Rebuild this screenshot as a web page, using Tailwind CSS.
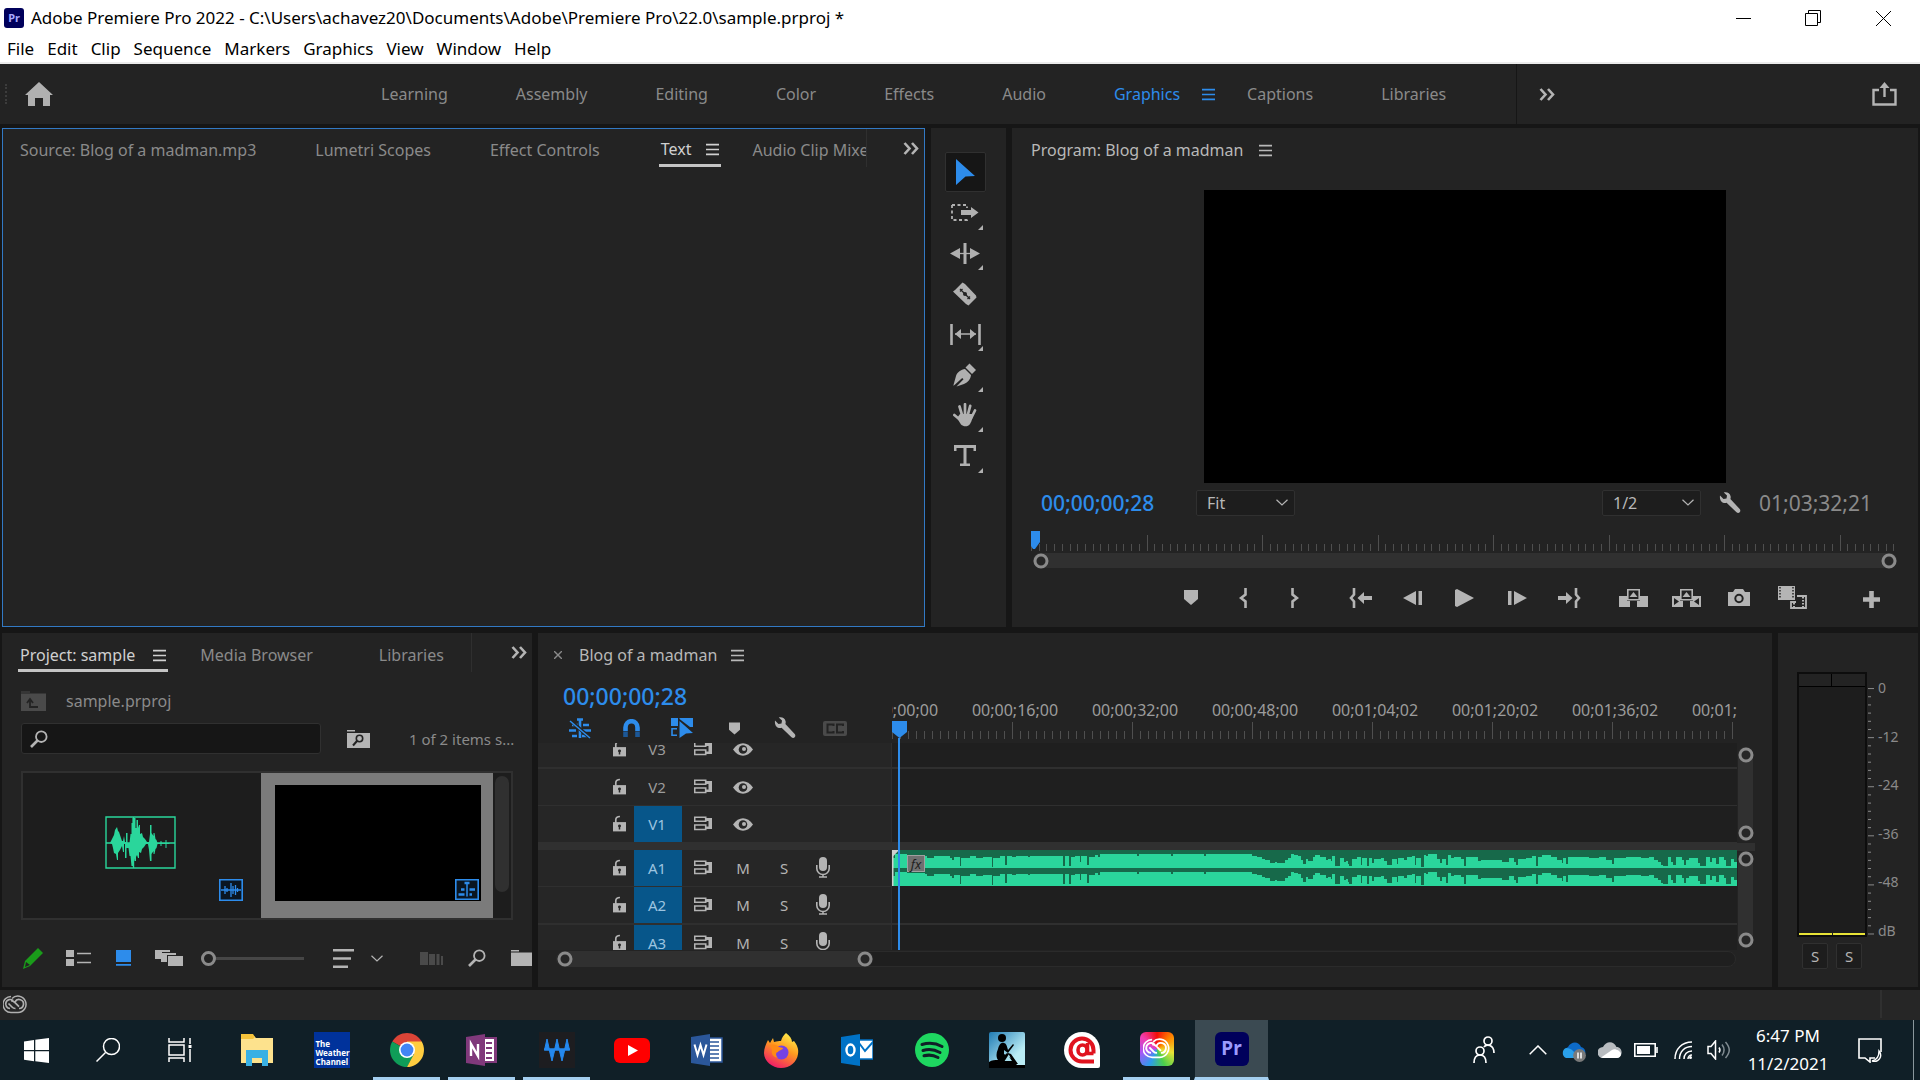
<!DOCTYPE html>
<html lang="en">
<head>
<meta charset="utf-8">
<title>Adobe Premiere Pro 2022</title>
<script src="https://cdn.jsdelivr.net/npm/@tailwindcss/browser@4"></script>
</head>
<body class="flex h-screen min-h-[900px] flex-col overflow-hidden bg-[#161616] font-['Noto_Sans',sans-serif] text-base leading-6 text-[#8a8a8a]">

<svg class="hidden" aria-hidden="true">
  <symbol id="burger" viewBox="0 0 12 12"><path d="M0 1.500h12M0 6h12M0 10.500h12" stroke="currentColor" stroke-width="1.400"/></symbol>
  <symbol id="more" viewBox="0 0 16 13"><path d="M1.500 1l5 5.500-5 5.500M9 1l5 5.500-5 5.500" fill="none" stroke="currentColor" stroke-width="2.600"/></symbol>
  <symbol id="chev" viewBox="0 0 12 7"><path d="M.5.7L6 6 11.500.7" fill="none" stroke="currentColor" stroke-width="1.200"/></symbol>
  <symbol id="wrench" viewBox="0 0 22 22"><path d="M1 3.500L4.500 7l3-.5.5-3L4.800.5C8-.3 11 1.300 11.600 4.300c.2 1 .1 2-.2 2.800l9.300 10c.9 1 .8 2.300 0 3.200s-2.300.9-3.200 0L7.600 10.800c-3.500 1.200-7.400-1.600-6.600-7.300z" fill="currentColor"/></symbol>
  <symbol id="knob" viewBox="0 0 16 16"><circle cx="8" cy="8" r="6" fill="#262626" stroke="#8a8a8a" stroke-width="3"/></symbol>
  <symbol id="marker" viewBox="0 0 14 15"><path d="M0 0h14v9l-7 6-7-6z" fill="currentColor"/></symbol>
  <symbol id="mag" viewBox="0 0 18 18"><circle cx="11.300" cy="6.700" r="5.300" fill="none" stroke="currentColor" stroke-width="1.800"/><path d="M7.500 10.500L1 17" stroke="currentColor" stroke-width="2.600"/></symbol>
  <symbol id="lock" viewBox="0 0 14 17"><path d="M0 7h14v10H0z" fill="currentColor"/><path d="M3 8V4.500C3 2.500 4.500 1 7.500 1" fill="none" stroke="currentColor" stroke-width="1.800"/><path d="M7 9.500a1.600 1.600 0 0 1 .8 3V15H6.200v-2.500a1.600 1.600 0 0 1 .8-3z" fill="#262626"/></symbol>
  <symbol id="sync" viewBox="0 0 19 15"><path d="M.7 1.200h11v4h-11zM.7 9h11v4.500h-11z" fill="none" stroke="currentColor" stroke-width="1.600"/><path d="M11 2h7v11h-6v-2.500h2.500V5H11z" fill="currentColor"/></symbol>
  <symbol id="eye" viewBox="0 0 20 13"><path d="M0 6.500C3 2.300 6.300.3 10 .3s7 2 10 6.200c-3 4.200-6.300 6.200-10 6.200S3 10.700 0 6.500z" fill="currentColor"/><circle cx="10" cy="6.500" r="4.300" fill="#262626"/><circle cx="11" cy="6" r="2" fill="currentColor"/></symbol>
  <symbol id="mic" viewBox="0 0 14 21"><rect x="3" y="0" width="8" height="14" rx="4" fill="currentColor"/><path d="M.8 8v3.500a6.200 6 0 0 0 12.400 0V8M7 17v3M3 20h8" fill="none" stroke="currentColor" stroke-width="1.600"/></symbol>
  <symbol id="cc" viewBox="0 0 24 19"><path d="M8 1.500A8 8 0 1 0 8 17.500h7A8.200 8.200 0 1 0 9 3.500" fill="none" stroke="currentColor" stroke-width="1.500"/><path d="M16 13.500a4.500 4.500 0 1 0-4-6.500M12.500 13.500a4.500 4.500 0 0 1-3.500-1.500L5.500 8.500M10 5.500a4.500 4.500 0 1 0-3 8M8 5.600c2 0 3 1 4 2l4 4" fill="none" stroke="currentColor" stroke-width="1.700"/></symbol>
</svg>

<!-- Title bar and menu -->
<header class="shrink-0 border-b-2 border-[#ececec] bg-white text-[17px] text-black">
  <div class="flex h-9 items-center pl-1">
    <div class="flex size-5 items-center justify-center rounded-[3px] bg-[#00005b] text-[11px] leading-5 font-bold text-[#a9a9ff]">Pr</div>
    <h1 class="ml-[7px] grow whitespace-nowrap">Adobe Premiere Pro 2022 - C:\Users\achavez20\Documents\Adobe\Premiere Pro\22.0\sample.prproj *</h1>
    <button aria-label="Minimize" class="flex h-8 w-[70px] items-center justify-center"><svg class="size-[15px]" viewBox="0 0 15 15"><path d="M0 7.500h15" stroke="#000"/></svg></button>
    <button aria-label="Restore" class="flex h-8 w-[70px] items-center justify-center"><svg class="size-4" viewBox="0 0 16 16"><path d="M.5 3.500h12v12H.5zM3.500 3V.5h12v12H13" fill="none" stroke="#000"/></svg></button>
    <button aria-label="Close" class="mr-[2px] flex h-8 w-[70px] items-center justify-center"><svg class="size-[15px]" viewBox="0 0 15 15"><path d="M0 0l15 15M15 0L0 15" stroke="#000"/></svg></button>
  </div>
  <nav class="flex h-[26px] items-center gap-[13px] px-[7px]">
    <button>File</button><button>Edit</button><button>Clip</button><button>Sequence</button><button>Markers</button><button>Graphics</button><button>View</button><button>Window</button><button>Help</button>
  </nav>
</header>

<!-- Workspaces -->
<nav class="mb-1 flex h-[60px] shrink-0 items-center bg-[#232323]">
  <div class="ml-[5px] h-5 w-[3px] border-l-2 border-dotted border-[#3c3c3c]"></div>
  <button aria-label="Home" class="ml-[17px] w-[322px]"><svg class="h-6 w-7" viewBox="0 0 28 24"><path d="M14 0l14 13h-3v11h-7v-8h-8v8H3V13H0z" fill="#b0b0b0"/></svg></button>
  <div class="flex grow items-center">
    <button class="px-[34px]">Learning</button><button class="px-[34px]">Assembly</button><button class="px-[34px]">Editing</button><button class="px-[34px]">Color</button><button class="px-[34px]">Effects</button><button class="px-[34px]">Audio</button>
    <button class="flex items-center gap-[22px] pr-8 pl-[34px] text-[#2d8ceb]">Graphics<svg class="size-[13px]"><use href="#burger"/></svg></button>
    <button class="pr-[34px]">Captions</button><button class="pr-[70px] pl-[34px]">Libraries</button>
    <div class="h-[60px] w-px bg-[#161616]"></div>
    <button aria-label="More workspaces" class="ml-[22px]"><svg class="h-[13px] w-4 text-[#b4b4b4]"><use href="#more"/></svg></button>
  </div>
  <button aria-label="Quick export" class="mr-[23px]"><svg class="h-6 w-[25px]" viewBox="0 0 25 24"><path d="M7 8H1.500v14.500h22V8H18M12.500 15V4" fill="none" stroke="#b4b4b4" stroke-width="2.400"/><path d="M12.500 0l5 6h-10z" fill="#b4b4b4"/></svg></button>
</nav>

<main class="flex min-h-0 grow flex-col gap-[6px] px-[2px] pb-[3px]">
  <div class="flex min-h-0 flex-[499] gap-[6px]">

    <!-- Source group -->
    <section class="flex min-w-0 flex-[922] flex-col border border-[#3279c4] bg-[#232323]">
      <div class="flex h-[38px] items-stretch pl-[17px]">
        <div class="flex min-w-0 grow gap-[59px] overflow-hidden border-r border-[#2f2f2f] whitespace-nowrap">
          <button class="pt-1">Source: Blog of a madman.mp3</button>
          <button class="pt-1">Lumetri Scopes</button>
          <button class="pt-1">Effect Controls</button>
          <button class="-mr-[28px] flex items-center gap-[15px] border-b-[3px] border-[#c4c4c4] px-[2px] pt-[5px] text-[#d0d0d0]">Text<svg class="size-[13px]"><use href="#burger"/></svg></button>
          <button class="pt-1">Audio Clip Mixer</button>
        </div>
        <button aria-label="More panels" class="flex w-[58px] items-center justify-end pr-[5px]"><svg class="h-[13px] w-4 text-[#b4b4b4]"><use href="#more"/></svg></button>
      </div>
    </section>

    <!-- Tools -->
    <aside class="w-[75px] shrink-0 bg-[#232323] pt-6 text-[#b0b0b0]">
      <div class="ml-[14px] flex h-[324px] flex-col justify-between">
        <button aria-label="Selection" class="flex h-10 w-[41px] items-center justify-center rounded-[2px] border border-[#303030] bg-[#161616]"><svg class="h-[26px] w-[19px]" viewBox="0 0 19 26"><path d="M0 0l19 17-9.500.5L0 26z" fill="#2d8ceb"/></svg></button>
        <button aria-label="Track select forward" class="relative flex h-10 w-[41px] items-center justify-center"><svg class="h-[17px] w-7" viewBox="0 0 28 17"><path d="M1 1h15v3M1 1v15h15v-3" fill="none" stroke="currentColor" stroke-width="1.800" stroke-dasharray="3 2.500"/><path d="M10 6h10V3l7.500 5.500L20 14v-3H10z" fill="currentColor"/></svg><svg class="absolute right-[3px] bottom-[3px] size-[5px]" viewBox="0 0 5 5"><path d="M5 0v5H0z" fill="currentColor"/></svg></button>
        <button aria-label="Ripple edit" class="relative flex h-10 w-[41px] items-center justify-center"><svg class="h-[21px] w-[30px]" viewBox="0 0 30 21"><path d="M0 10.500L10 5v11zM30 10.500L20 5v11z" fill="currentColor"/><path d="M15 0v21" stroke="currentColor" stroke-width="3"/><path d="M8 10.500h14" stroke="currentColor" stroke-width="1.300"/></svg><svg class="absolute right-[3px] bottom-[3px] size-[5px]" viewBox="0 0 5 5"><path d="M5 0v5H0z" fill="currentColor"/></svg></button>
        <button aria-label="Razor" class="flex h-10 w-[41px] items-center justify-center"><svg class="size-6" viewBox="0 0 24 24"><path d="M0 9.500l2-1.500L8 2l1.500-1.500L12 2l11 11.500.5 2-8 8L13 22 1.500 11z" fill="currentColor"/><path d="M7 7l10 10M7 9.500L9.500 7M14.500 17l2.500-2.500" stroke="#232323" stroke-width="1.300"/><circle cx="12" cy="12" r="2" fill="#232323"/></svg></button>
        <button aria-label="Slip" class="relative flex h-10 w-[41px] items-center justify-center"><svg class="h-[21px] w-[31px]" viewBox="0 0 31 21"><path d="M1.500 0v21M29.500 0v21" stroke="currentColor" stroke-width="2.600"/><path d="M5 10h21" stroke="currentColor" stroke-width="1.500"/><path d="M5 10l6-5v10zM26 10l-6-5v10z" fill="currentColor"/></svg><svg class="absolute right-[3px] bottom-[3px] size-[5px]" viewBox="0 0 5 5"><path d="M5 0v5H0z" fill="currentColor"/></svg></button>
        <button aria-label="Pen" class="relative flex h-10 w-[41px] items-center justify-center"><svg class="size-6" viewBox="0 0 24 24"><path d="M16.500.5L23 7l-4 4-6.500-6.500zM12 6l6 6c-.5 4-3 7.500-7 9l-7.500 2.500 7-7.200-1.300-1.300L1.500 22 .3 22.700 3 13c1.300-4 5-6.500 9-7z" fill="currentColor"/></svg><svg class="absolute right-[3px] bottom-[3px] size-[5px]" viewBox="0 0 5 5"><path d="M5 0v5H0z" fill="currentColor"/></svg></button>
        <button aria-label="Hand" class="relative flex h-10 w-[41px] items-center justify-center"><svg class="size-6" viewBox="0 0 24 24"><path d="M1.300 12l6 5M6.500 3.500l3 10M12 1.200V13M17.200 2.800L14.500 13M22 7.500l-4 8" fill="none" stroke="currentColor" stroke-width="2.700" stroke-linecap="round"/><path d="M7 11h12c1 3 0 7-2 10-2 3-6.500 3-9 .5L4 15z" fill="currentColor"/></svg><svg class="absolute right-[3px] bottom-[3px] size-[5px]" viewBox="0 0 5 5"><path d="M5 0v5H0z" fill="currentColor"/></svg></button>
        <button aria-label="Type" class="relative flex h-10 w-[41px] items-center justify-center"><svg class="h-[21px] w-[22px]" viewBox="0 0 22 21"><path d="M0 0h22v6h-2.500V3h-7v15.500H16V21H6v-2.500h3.500V3h-7v3H0z" fill="currentColor"/></svg><svg class="absolute right-[3px] bottom-[3px] size-[5px]" viewBox="0 0 5 5"><path d="M5 0v5H0z" fill="currentColor"/></svg></button>
      </div>
    </aside>

    <!-- Program monitor -->
    <section class="flex min-w-0 flex-[907] flex-col bg-[#232323] text-[#b4b4b4]">
      <div class="flex h-[62px] shrink-0 items-start pt-[10px] pl-[19px]"><button class="flex items-center gap-4 text-[#b8b8b8]">Program: Blog of a madman<svg class="size-[13px]"><use href="#burger"/></svg></button></div>
      <div class="flex min-h-0 grow justify-center"><div class="aspect-[521/292] h-full bg-black"></div></div>
      <div class="flex h-[42px] shrink-0 items-center pr-[46px] pb-[2px] pl-[29px]">
        <div class="w-[155px] text-[21px] font-medium text-[#2d8ceb]">00;00;00;28</div>
        <label class="relative"><span class="sr-only">Zoom level</span><select class="block h-[26px] w-[99px] appearance-none rounded-[2px] border border-[#303030] bg-[#1d1d1d] pl-[10px] leading-[22px] text-[#b8b8b8]"><option>Fit</option></select><svg class="pointer-events-none absolute top-[9px] right-[7px] h-[7px] w-3"><use href="#chev"/></svg></label>
        <div class="grow"></div>
        <label class="relative"><span class="sr-only">Playback resolution</span><select class="block h-[26px] w-[99px] appearance-none rounded-[2px] border border-[#303030] bg-[#1d1d1d] pl-[10px] leading-[22px] text-[#b8b8b8]"><option>1/2</option></select><svg class="pointer-events-none absolute top-[9px] right-[7px] h-[7px] w-3"><use href="#chev"/></svg></label>
        <button aria-label="Settings" class="mx-[18px]"><svg class="size-[22px]"><use href="#wrench"/></svg></button>
        <div class="text-[21px] text-[#8a8a8a]">01;03;32;21</div>
      </div>
      <div class="relative mx-[19px] h-[28px] shrink-0">
        <svg id="programRuler" class="h-full w-full"></svg>
        <svg class="absolute top-[6px] left-0 h-[18px] w-[9px]" viewBox="0 0 9 18"><path d="M0 0h9v11l-5 7H2l-2-3z" fill="#2d8ceb"/></svg>
      </div>
      <div class="mx-[21px] flex h-[15px] shrink-0 justify-between rounded-full bg-[#303030]"><svg class="size-4"><use href="#knob"/></svg><svg class="size-4"><use href="#knob"/></svg></div>
      <div class="grid h-[59px] shrink-0 grid-cols-[1fr_auto_1fr] items-center">
        <div class="flex items-center justify-end pr-[14px]">
          <button aria-label="Add marker" class="flex w-[52px] justify-center"><svg class="h-[15px] w-[14px]"><use href="#marker"/></svg></button>
          <button aria-label="Mark in" class="flex w-[52px] justify-center"><svg class="h-5 w-2" viewBox="0 0 8 20"><path d="M6.500 0v6.500L2 10l4.500 3.500V20" fill="none" stroke="currentColor" stroke-width="2.600"/></svg></button>
          <button aria-label="Mark out" class="flex w-[52px] justify-center"><svg class="h-5 w-2" viewBox="0 0 8 20"><path d="M1.500 0v6.500L6 10l-4.500 3.500V20" fill="none" stroke="currentColor" stroke-width="2.600"/></svg></button>
        </div>
        <div class="flex items-center">
          <button aria-label="Go to in" class="flex w-[52px] justify-center"><svg class="h-5 w-6" viewBox="0 0 24 20"><path d="M5 0v6.500L2 10l3 3.500V20" fill="none" stroke="currentColor" stroke-width="2.600"/><path d="M8.500 10l6.500-6v4h8v4h-8v4z" fill="currentColor"/></svg></button>
          <button aria-label="Step back" class="flex w-[52px] justify-center"><svg class="h-[14px] w-5" viewBox="0 0 20 14"><path d="M0 7L13 0v14zM15.500 0H19v14h-3.500z" fill="currentColor"/></svg></button>
          <button aria-label="Play" class="flex w-[52px] justify-center"><svg class="h-[18px] w-[19px]" viewBox="0 0 19 18"><path d="M0 1l2-1 17 9-17 9-2-1z" fill="currentColor"/></svg></button>
          <button aria-label="Step forward" class="flex w-[52px] justify-center"><svg class="h-[14px] w-5" viewBox="0 0 20 14"><path d="M20 7L7 0v14zM1 0h3.500v14H1z" fill="currentColor"/></svg></button>
          <button aria-label="Go to out" class="flex w-[52px] justify-center"><svg class="h-5 w-6" viewBox="0 0 24 20"><path d="M19 0v6.500l3 3.500-3 3.500V20" fill="none" stroke="currentColor" stroke-width="2.600"/><path d="M15.500 10L9 4v4H1v4h8v4z" fill="currentColor"/></svg></button>
        </div>
        <div class="flex items-center pr-[38px] pl-3">
          <button aria-label="Lift" class="flex w-[53px] shrink-0 justify-center"><svg class="h-[18px] w-[29px]" viewBox="0 0 29 18"><path d="M0 7h8v5h3v6H0zM29 7h-8v5h-3v6h11z" fill="currentColor"/><path d="M8.800.8h11.400v10H8.800z" fill="none" stroke="currentColor" stroke-width="1.600"/><path d="M14.500 3l4 5h-8z" fill="currentColor"/></svg></button>
          <button aria-label="Extract" class="flex w-[53px] shrink-0 justify-center"><svg class="h-[18px] w-[29px]" viewBox="0 0 29 18"><path d="M0 7h8v5h3v6H0zM29 7h-8v5h-3v6h11z" fill="currentColor"/><path d="M2 9l5 3.500L2 16zM27 9l-5 3.500 5 3.500z" fill="#232323"/><path d="M8.800.8h11.400v10H8.800z" fill="none" stroke="currentColor" stroke-width="1.600"/><path d="M14.500 3l4 5h-8z" fill="currentColor"/></svg></button>
          <button aria-label="Export frame" class="flex w-[53px] shrink-0 justify-center"><svg class="h-[17px] w-[22px]" viewBox="0 0 22 17"><path d="M0 3h5l2-3h8l2 3h5v14H0z" fill="currentColor"/><circle cx="11" cy="9.500" r="3.700" fill="none" stroke="#232323" stroke-width="2"/></svg></button>
          <button aria-label="Comparison view" class="flex w-[53px] shrink-0 justify-center"><svg class="h-[23px] w-[29px]" viewBox="0 0 29 23"><path d="M0 0h17v14H0z" fill="currentColor"/><path d="M2 1v12M15 1v12" stroke="#232323" stroke-width="1.500" stroke-dasharray="1.500 1.500"/><path d="M19 10h9v12H13v-6h5" fill="none" stroke="currentColor" stroke-width="1.800"/><path d="M16 17v4M25 11v10" stroke="currentColor" stroke-width="2" stroke-dasharray="1.500 1.500"/></svg></button>
          <button aria-label="Button editor" class="ml-auto"><svg class="mt-1 size-[17px]" viewBox="0 0 17 17"><path d="M8.500 0v17M0 8.500h17" stroke="currentColor" stroke-width="4.600"/></svg></button>
        </div>
      </div>
    </section>
  </div>

  <div class="flex min-h-0 flex-[354] gap-[6px]">

    <!-- Project -->
    <section class="flex min-w-0 flex-[530] flex-col overflow-hidden bg-[#232323]">
      <div class="flex h-[39px] shrink-0 pl-4">
        <div class="flex min-w-0 grow items-stretch overflow-hidden border-r border-[#2f2f2f] whitespace-nowrap">
          <button class="flex items-center gap-[18px] border-b-[3px] border-[#c4c4c4] px-[2px] pt-2 text-[#d0d0d0]">Project: sample<svg class="size-[13px]"><use href="#burger"/></svg></button>
          <button class="ml-8 pt-[5px]">Media Browser</button>
          <button class="ml-[66px] pt-[5px]">Libraries</button>
        </div>
        <button aria-label="More panels" class="flex w-[60px] items-center justify-end pr-[5px]"><svg class="h-[13px] w-4 text-[#b4b4b4]"><use href="#more"/></svg></button>
      </div>
      <div class="flex h-[51px] shrink-0 items-center gap-5 pt-[6px] pl-[19px]"><svg class="h-5 w-[25px]" viewBox="0 0 25 20"><path d="M0 1h9M0 3h25v17H0z" fill="#4a4a4a" stroke="#4a4a4a"/><path d="M9 9v7h8M6 12l3-4 3 4" fill="none" stroke="#232323" stroke-width="1.800"/></svg>sample.prproj</div>
      <div class="flex h-[31px] shrink-0 items-center pr-4 pl-[19px]">
        <label class="relative w-[300px] shrink-0"><span class="sr-only">Search project</span><svg class="absolute top-[7px] left-[9px] size-[18px] text-[#b4b4b4]"><use href="#mag"/></svg><input type="text" class="block h-[31px] w-full rounded-[3px] border border-[#303030] bg-[#161616] pl-9 outline-none"></label>
        <button aria-label="Create search bin" class="ml-[26px]"><svg class="h-[18px] w-[23px]" viewBox="0 0 23 18"><path d="M0 0h8v1.500H0zM0 3h23v15H0z" fill="#b4b4b4"/><circle cx="12.500" cy="8.500" r="3.200" fill="none" stroke="#232323" stroke-width="1.600"/><path d="M10 11l-4 4.500" stroke="#232323" stroke-width="2"/></svg></button>
        <div class="ml-[39px] whitespace-nowrap text-[15px]">1 of 2 items s...</div>
      </div>
      <div class="mx-[19px] mt-[17px] flex min-h-0 grow border-2 border-[#303030] bg-[#1d1d1d]">
        <div class="relative flex flex-1 items-center justify-center pr-1 pb-[6px]">
          <svg class="h-[53px] w-[71px]" viewBox="0 0 71 53"><path d="M1 1h69v51H1zM1 27h69M28.500 1v51" fill="none" stroke="#2ad69b" stroke-width="1.400"/><path d="M5 27l2-4 2-4 1-5 2-3 1 4 1 1 2 6 1 3h1l1-5 1 6h1V17h1.500v10h2l1-9h1V7h1V2h3v10h1V4h1.500v8l1-3h1v9l2-1 1 4 2 2 2 3h2l1-8V9h1.500v8l2 3v-3h1l1 6 1 1 1 3h3v-2h1v2h4v-3h1v3h3v1h-3v4h-1v-4h-4v2h-1v-2h-3l-1 4-1 1-1 5h-1v-3l-2 3v7h-1.500l-1-11-1-6h-2l-2 3-2 2-1 4-2-1v6h-1l-1-3-1 2v4h-1.500l-1-6v11h-2l-1-10h-1l-1-8h-2v10H20V28h-1v8h-1l-1-6-2 4-2 3v7h-1l-1-6-2-1-1-5-1-4z" fill="#2ad69b"/></svg>
          <svg class="absolute right-[18px] bottom-[17px] h-[22px] w-6" viewBox="0 0 24 22"><path d="M.8.800h22.400v20.400H.8z" fill="#0a1622" stroke="#2d8ceb" stroke-width="1.600"/><path d="M2 11h20M6 7v8M8 9v4M12 4v14M14 7v8M16.500 6v10M18.500 9v4" stroke="#2d8ceb" stroke-width="1.300"/></svg>
        </div>
        <div class="relative w-[232px] shrink-0 bg-[#7b7b7b] pt-3 pr-3 pb-[17px] pl-[14px]"><div class="h-full bg-black"></div>
          <svg class="absolute right-[14px] bottom-[18px] h-[21px] w-6" viewBox="0 0 24 21"><path d="M.8.800h22.400v19.400H.8z" fill="#0a1622" stroke="#2d8ceb" stroke-width="1.600"/><path d="M9.500 4h5M6 10.500h3.500M14.500 10.500H20M3.500 15.500h6M14.500 15.500H17" stroke="#2d8ceb" stroke-width="2.400"/><path d="M12 3.500v14" stroke="#2d8ceb" stroke-width="1.500"/></svg>
        </div>
        <div class="w-[18px] pt-[3px] pl-[2px]"><div class="h-[116px] w-[14px] rounded-full bg-[#303030]"></div></div>
      </div>
      <div class="flex h-[67px] shrink-0 items-center pt-[9px] pl-[21px] text-[#b4b4b4]">
        <button aria-label="Writable" class="shrink-0"><svg class="h-[21px] w-5" viewBox="0 0 20 21"><path d="M15 0l5 5L7 18l-7 3 2-8z" fill="#1a9c1a"/><path d="M3 14l4 3-5 2z" fill="#232323"/></svg></button>
        <button aria-label="List view" class="ml-[23px] shrink-0"><svg class="h-4 w-[25px]" viewBox="0 0 25 16"><path d="M0 0h8v7H0zM0 9h8v7H0z" fill="currentColor"/><path d="M11 3.500h14M11 12.500h14" stroke="currentColor" stroke-width="1.600"/></svg></button>
        <button aria-label="Icon view" class="ml-[25px] shrink-0"><svg class="h-4 w-[15px]" viewBox="0 0 15 16"><path d="M0 0h15v12H0zM0 14h15v1.800H0z" fill="#2d8ceb"/></svg></button>
        <button aria-label="Freeform view" class="ml-6 shrink-0"><svg class="h-4 w-7" viewBox="0 0 28 16"><path d="M0 0h15v2H7v7H0zM6 3h15v2h-9v7H6zM13 6h15v10H13z" fill="currentColor"/></svg></button>
        <input aria-label="Thumbnail size" type="range" value="0" class="ml-[18px] h-4 w-[103px] shrink-0 appearance-none bg-transparent [&::-webkit-slider-runnable-track]:h-[3px] [&::-webkit-slider-runnable-track]:bg-[#464646] [&::-webkit-slider-thumb]:-mt-[6px] [&::-webkit-slider-thumb]:size-[15px] [&::-webkit-slider-thumb]:appearance-none [&::-webkit-slider-thumb]:rounded-full [&::-webkit-slider-thumb]:border-[3px] [&::-webkit-slider-thumb]:border-[#8a8a8a] [&::-webkit-slider-thumb]:bg-[#232323]">
        <button aria-label="Sort icons" class="ml-[29px] flex shrink-0 items-center gap-[17px]"><svg class="h-[19px] w-[21px]" viewBox="0 0 21 19"><path d="M0 1.300h21M0 9.500h18M0 17.700h15" stroke="currentColor" stroke-width="2.400"/></svg><svg class="h-[7px] w-3"><use href="#chev"/></svg></button>
        <button aria-label="Automate to sequence" class="ml-[37px] shrink-0"><svg class="h-[13px] w-[23px]" viewBox="0 0 23 13"><path d="M0 0h8v13H0zM9 2h6v11H9zM16.500 2h3v11h-3zM21 4h2v9h-2z" fill="#4a4a4a"/></svg></button>
        <button aria-label="Find" class="ml-[25px] shrink-0"><svg class="size-[18px]"><use href="#mag"/></svg></button>
        <button aria-label="New bin" class="ml-[25px] shrink-0"><svg class="h-4 w-[23px]" viewBox="0 0 23 16"><path d="M0 0h8v1.500H0zM0 2.500h23V16H0z" fill="currentColor"/></svg></button>
      </div>
    </section>

    <!-- Timeline -->
    <section class="flex min-w-0 flex-[1234] flex-col bg-[#232323] text-[#b4b4b4]">
      <div class="flex h-11 shrink-0 items-center pl-4">
        <button aria-label="Close sequence"><svg class="size-2" viewBox="0 0 8 8"><path d="M0 0l8 8M8 0L0 8" stroke="#8a8a8a" stroke-width="1.400"/></svg></button>
        <button class="ml-[17px] flex items-center gap-[14px] text-[#b8b8b8]">Blog of a madman<svg class="size-[13px]"><use href="#burger"/></svg></button>
      </div>
      <div class="flex min-h-0 grow">
        <div class="flex w-[354px] shrink-0 flex-col border-r border-[#2f2f2f]">
          <div class="-mr-px h-[66px] shrink-0 bg-[#232323] pl-[25px]">
            <div class="h-10 text-[23px] leading-[38px] font-medium text-[#2d8ceb]">00;00;00;28</div>
            <div class="flex h-[22px] items-center">
              <button aria-label="Insert as nest" class="ml-[6px]"><svg class="h-[21px] w-[22px]" viewBox="0 0 22 21"><path d="M8 1.500h6M11 1v19M3 7h6M14 7h6M0 12.500h7M14 12.500h8M3 18h5M13 18h6" stroke="#2d8ceb" stroke-width="2.600"/><path d="M1 2l20 18" stroke="#232323" stroke-width="3.500"/><path d="M1 3l20 17" stroke="#2d8ceb" stroke-width="1.500"/></svg></button>
              <button aria-label="Snap" class="ml-8"><svg class="h-[18px] w-[17px]" viewBox="0 0 17 18"><path d="M2.500 12V8.500a6 6.300 0 0 1 12 0V12" fill="none" stroke="#2d8ceb" stroke-width="4.600"/><path d="M2.500 12.500V18M14.500 12.500V18" stroke="#1c5796" stroke-width="4.600"/></svg></button>
              <button aria-label="Linked selection" class="ml-[31px]"><svg class="h-5 w-[22px]" viewBox="0 0 22 20"><path d="M0 0h7v8H0zM8.500 0H22v9h-3L8.500 1z" fill="#2d8ceb"/><path d="M6 10.800H1v6.500h5" fill="none" stroke="#2d8ceb" stroke-width="1.600"/><path d="M8.500 3L22 15l-7 .5L8.500 20z" fill="#2d8ceb"/></svg></button>
              <button aria-label="Add marker" class="ml-9"><svg class="h-[13px] w-[11px]"><use href="#marker"/></svg></button>
              <button aria-label="Timeline settings" class="ml-[34px]"><svg class="size-[22px]"><use href="#wrench"/></svg></button>
              <button aria-label="Captions" class="ml-[27px]"><svg class="h-[15px] w-6" viewBox="0 0 24 15"><rect width="24" height="15" rx="2" fill="#4a4a4a"/><path d="M10.500 5V3.500H4.500v8h6V10M20 5V3.500h-6v8h6V10" fill="none" stroke="#232323" stroke-width="2"/></svg></button>
            </div>
          </div>
          <div id="videoHeads" class="flex min-h-0 flex-[99] flex-col justify-end overflow-hidden"></div>
          <div class="-mr-px h-2 shrink-0 bg-[#303030]"></div>
          <div id="audioHeads" class="flex min-h-0 flex-[100] flex-col overflow-hidden"></div>
        </div>
        <div class="relative flex min-w-0 grow flex-col">
          <div class="flex h-[44px] shrink-0 overflow-hidden pt-[22px] leading-[22px] text-[#9c9c9c]">
            <div class="-ml-[57px] w-[120px] shrink-0 text-center">00;00;00;00</div>
            <div class="w-[120px] shrink-0 text-center">00;00;16;00</div>
            <div class="w-[120px] shrink-0 text-center">00;00;32;00</div>
            <div class="w-[120px] shrink-0 text-center">00;00;48;00</div>
            <div class="w-[120px] shrink-0 text-center">00;01;04;02</div>
            <div class="w-[120px] shrink-0 text-center">00;01;20;02</div>
            <div class="w-[120px] shrink-0 text-center">00;01;36;02</div>
            <div class="w-[120px] shrink-0 text-center">00;01;52;02</div>
          </div>
          <svg id="timeRuler" class="h-[22px] w-full shrink-0"></svg>
          <div class="flex min-h-0 flex-[99] flex-col justify-end overflow-hidden bg-[#1f1f1f]">
            <div class="h-[38px] shrink-0 border-b-2 border-[#2f2f2f]"></div>
            <div class="h-[37px] shrink-0 border-b border-[#2f2f2f]"></div>
            <div class="h-9 shrink-0"></div>
          </div>
          <div class="h-2 shrink-0 bg-[#303030]"></div>
          <div class="flex min-h-0 flex-[100] flex-col overflow-hidden bg-[#1f1f1f]">
            <div class="relative h-9 shrink-0 bg-[#17694a]">
              <svg id="wave" class="h-9 w-full" viewBox="0 0 846 36" preserveAspectRatio="none" shape-rendering="crispEdges"></svg>
              <svg class="absolute top-0 left-0 h-9 w-2" viewBox="0 0 8 36"><path d="M0 0h7L1.500 6v30H0z" fill="#cfcfcf"/></svg>
              <span class="absolute top-[5px] left-[15px] flex h-[17px] w-[18px] items-center justify-center border border-[#a0a0a0] bg-[#707070] text-[13px] leading-[14px] text-[#1f1f1f] italic">fx</span>
            </div>
            <div class="h-[39px] shrink-0 border-b-2 border-[#2f2f2f]"></div>
          </div>
          <svg class="absolute top-[44px] left-0 h-[17px] w-[15px]" viewBox="0 0 15 17"><path d="M0 0h15v11l-7.500 6L0 11z" fill="#2d8ceb"/></svg>
          <div class="absolute top-[61px] bottom-0 left-[6px] w-[2px] bg-[#2d8ceb]"></div>
        </div>
        <div class="flex w-[35px] shrink-0 flex-col">
          <div class="mb-1 h-[62px] shrink-0"></div>
          <div class="min-h-0 flex-[99] pt-1 pl-px"><div class="flex h-[calc(100%-2px)] w-[15px] flex-col justify-between rounded-full bg-[#303030]"><svg class="size-4"><use href="#knob"/></svg><svg class="size-4"><use href="#knob"/></svg></div></div>
          <div class="h-2 w-[18px] shrink-0 bg-[#303030]"></div>
          <div class="min-h-0 flex-[100] pb-[2px] pl-px"><div class="flex h-full w-[15px] flex-col justify-between rounded-full bg-[#303030]"><svg class="size-4"><use href="#knob"/></svg><svg class="size-4"><use href="#knob"/></svg></div></div>
        </div>
      </div>
      <div class="h-[37px] shrink-0 pt-px pr-9 pl-[18px]">
        <div class="h-4 rounded-full border border-[#2b2b2b] bg-[#1f1f1f]"><div class="-mt-px flex h-4 w-[316px] justify-between rounded-full bg-[#303030]"><svg class="size-4"><use href="#knob"/></svg><svg class="size-4"><use href="#knob"/></svg></div></div>
      </div>
    </section>

    <!-- Audio meters -->
    <section class="flex w-[140px] shrink-0 flex-col bg-[#232323] pt-[39px] pl-[19px]">
      <div class="flex min-h-0 grow">
        <div class="flex w-[70px] flex-col border-2 border-[#0d0d0d] bg-[#1d1d1d]">
          <div class="flex h-[13px] border-b border-black bg-[#232323]"><div class="w-1/2 border-r border-black"></div></div>
          <div class="grow"></div>
          <div class="flex h-[2px] gap-px"><div class="grow bg-[#e8e337]"></div><div class="grow bg-[#e8e337]"></div></div>
        </div>
        <svg id="meterTicks" class="h-full w-[7px]" viewBox="0 0 7 264" preserveAspectRatio="none"></svg>
        <div class="-mb-1 ml-[4px] flex flex-col justify-between pt-[6px] text-sm leading-5"><span>0</span><span>-12</span><span>-24</span><span>-36</span><span>-48</span><span>dB</span></div>
      </div>
      <div class="flex h-[50px] shrink-0 items-start gap-2 pt-[6px] pl-[5px] text-[15px] text-[#b4b4b4]">
        <button aria-label="Solo left" class="size-[26px] rounded-[2px] border border-[#303030] bg-[#1d1d1d]">S</button>
        <button aria-label="Solo right" class="size-[26px] rounded-[2px] border border-[#303030] bg-[#1d1d1d]">S</button>
      </div>
    </section>
  </div>
</main>

<!-- Status bar -->
<div class="flex h-[30px] shrink-0 items-center bg-[#262626] pb-[2px] pl-[3px]"><svg class="h-[19px] w-6 text-[#b0b0b0]"><use href="#cc"/></svg><div class="mr-[38px] ml-auto h-full w-[2px] bg-[#303030]"></div></div>

<!-- Windows taskbar -->
<footer class="flex h-[60px] shrink-0 items-stretch bg-[#101f27] text-[17px] text-white">
  <button aria-label="Start" class="flex w-[72px] items-center justify-center"><svg class="size-[25px]" viewBox="0 0 25 25"><path d="M0 3.500L10 2v10H0zM11.300 1.800L25 0v12H11.300zM0 13.200h10v10L0 21.700zM11.300 13.200H25V25l-13.700-1.800z" fill="#fff"/></svg></button>
  <button aria-label="Search" class="flex w-[72px] items-center justify-center"><svg class="size-6" viewBox="0 0 24 24"><circle cx="15.500" cy="8.500" r="8" fill="none" stroke="#fff" stroke-width="1.500"/><path d="M9.500 14.500L.5 23.500" stroke="#fff" stroke-width="1.500"/></svg></button>
  <button aria-label="Task view" class="flex w-[72px] items-center justify-center"><svg class="size-6" viewBox="0 0 24 24"><path d="M1 0v4h15V0M1 7h15v10H1zM1 24v-4h15v4M22 0v6M22 11v13" fill="none" stroke="#fff" stroke-width="1.500"/><path d="M20.500 7h3v3h-3z" fill="#fff"/></svg></button>
  <div class="ml-[3px] flex">
    <button aria-label="File Explorer" class="flex w-[75px] items-center justify-center"><svg class="h-8 w-8" viewBox="0 0 32 32"><path d="M0 2h13l2 2h17v25H0z" fill="#fde28d"/><path d="M0 0h12l2 3-2 2H0z" fill="#f5c33b"/><path d="M5 32V16h22v16h-6v-8H11v8z" fill="#39b0e4"/></svg></button>
    <button class="flex w-[75px] items-center justify-center"><span class="flex size-9 flex-col justify-end bg-[#00329b] pb-[2px] pl-[2px] text-left text-[8px] leading-[9px] font-bold">The<br>Weather<br>Channel</span></button>
    <button aria-label="Chrome" class="flex w-[75px] items-center justify-center border-b-[3px] border-[#a4cff0] pt-[3px] [border-image:linear-gradient(to_right,transparent_7px,#a4cff0_7px,#a4cff0_68px,transparent_68px)_3]"><svg class="size-[34px]" viewBox="0 0 34 34"><path d="M17 17L2.300 8.500a17 17 0 0 1 29.400 0z" fill="#db4437"/><path d="M17 17L2.300 8.500A17 17 0 0 0 17 34l7-12z" fill="#0f9d58"/><path d="M17 17V8.500h14.700A17 17 0 0 1 17 34l7-13z" fill="#ffcd40"/><circle cx="17" cy="17" r="8" fill="#fff"/><circle cx="17" cy="17" r="6.400" fill="#4285f4"/></svg></button>
    <button aria-label="OneNote" class="flex w-[75px] items-center justify-center border-b-[3px] border-[#a4cff0] pt-[3px] [border-image:linear-gradient(to_right,transparent_7px,#a4cff0_7px,#a4cff0_68px,transparent_68px)_3]"><svg class="size-8" viewBox="0 0 32 32"><path d="M16 4h14v24H16z" fill="#fff" stroke="#80397b" stroke-width="2"/><path d="M20 9h6M20 14h6M20 19h6M20 24h6M29 5v22" stroke="#80397b" stroke-width="2"/><path d="M0 3l19-3v32L0 29z" fill="#80397b"/><path d="M5 22V10l7 12V10" fill="none" stroke="#fff" stroke-width="2.400"/></svg></button>
    <button aria-label="Wave editor" class="flex w-[75px] items-center justify-center border-b-[3px] border-[#a4cff0] pt-[3px] [border-image:linear-gradient(to_right,transparent_7px,#a4cff0_7px,#a4cff0_68px,transparent_68px)_3]"><svg class="size-9" viewBox="0 0 36 36"><path d="M0 0h36v36H0z" fill="#1d1d20"/><path d="M5 17.500h26" stroke="#2488ee" stroke-width="2"/><path d="M5.500 18L8 7l2.500 11zM15.500 18L18 7l2.500 11zM25.500 18L28 7l2.500 11zM10 17l3 12 3-12zM20 17l3 12 3-12z" fill="#2488ee" stroke="#2488ee"/></svg></button>
    <button aria-label="YouTube" class="flex w-[75px] items-center justify-center"><svg class="h-[25px] w-9" viewBox="0 0 36 25"><rect width="36" height="25" rx="6" fill="#f00"/><path d="M14 7l10 5.500L14 18z" fill="#fff"/></svg></button>
    <button aria-label="Word" class="flex w-[75px] items-center justify-center"><svg class="size-8" viewBox="0 0 32 32"><path d="M17 4h14v24H17z" fill="#fff" stroke="#2b579a" stroke-width="1.500"/><path d="M19 8h9M19 12h9M19 16h9M19 20h9M19 24h9" stroke="#2b579a" stroke-width="1.600"/><path d="M0 3l19-3v32L0 29z" fill="#2b579a"/><path d="M3.500 10.500L6.500 21l3-10 3 10 3-10.500" fill="none" stroke="#fff" stroke-width="2"/></svg></button>
    <button aria-label="Firefox" class="flex w-[75px] items-center justify-center"><svg class="size-[35px]" viewBox="0 0 35 35"><defs><linearGradient id="ff" x1=".8" y1="0" x2=".3" y2="1"><stop stop-color="#fff44f"/><stop offset=".45" stop-color="#ff9a1f"/><stop offset="1" stop-color="#f0186a"/></linearGradient></defs><path d="M22 0c4 3 6 6 6 9l2-1c3 4 5 8 4 13-1 8-8 14-17 14S0 28 0 20c0-5 2-9 4-13l2 3 3-5 1 4c3-1 5-1 7-1 1-4 3-6 5-8z" fill="url(#ff)"/><circle cx="17.500" cy="19.500" r="7" fill="#7542e5"/><path d="M6 12c4-1 7 0 9 2l4 1c0 2-4 2-5 4-2 0-3 3 0 6-5-1-7-4-6-8z" fill="#ff8a16"/></svg></button>
    <button aria-label="Outlook" class="flex w-[75px] items-center justify-center"><svg class="size-8" viewBox="0 0 32 32"><path d="M17 6h15v19H17z" fill="#fff" stroke="#0072c6" stroke-width="1.500"/><path d="M18 9l6 8 8-9" fill="none" stroke="#0072c6" stroke-width="2"/><path d="M0 3l19-3v32L0 29z" fill="#0072c6"/><ellipse cx="9.500" cy="16" rx="4" ry="5.500" fill="none" stroke="#fff" stroke-width="2.400"/></svg></button>
    <button aria-label="Spotify" class="flex w-[75px] items-center justify-center"><svg class="size-[34px]" viewBox="0 0 34 34"><circle cx="17" cy="17" r="17" fill="#1ed760"/><path d="M7 11.500c7-2 14-1.300 20 2M8 17.500c6-1.700 11.500-1 17 2M9 22.800c5-1.300 9.500-.8 14 1.700" fill="none" stroke="#101f27" stroke-width="3" stroke-linecap="round"/></svg></button>
    <button aria-label="Kindle" class="flex w-[75px] items-center justify-center"><svg class="size-9" viewBox="0 0 36 36"><defs><linearGradient id="kd" x1="0" y1="0" x2="1" y2="1"><stop stop-color="#1f7bb4"/><stop offset=".7" stop-color="#b9ecf5"/></linearGradient></defs><rect width="36" height="36" rx="2" fill="url(#kd)"/><circle cx="13" cy="6" r="4" fill="#000"/><path d="M0 30c3-2 6-2 9-2-2-3-2-7 0-11 1-4 3-7 6-6 2 0 3 3 4 7l5-6 1 1-6 8-4-3v4l7 4 6 7h8v3H0z" fill="#000"/><path d="M14 29l5-6 4 6z" fill="#a6dfec"/><path d="M11 28l7-7 2 1-5 8zM19 21l3 1 7 10h-4z" fill="#000"/></svg></button>
    <button aria-label="Address book" class="flex w-[75px] items-center justify-center"><svg class="size-9" viewBox="0 0 36 36"><path d="M18 0a18 18 0 0 1 18 18v16a2 2 0 0 1-2 2H18a18 18 0 0 1 0-36z" fill="#fff"/><path d="M30 29.500H18A11.500 11.500 0 1 1 29.500 18v3.500" fill="none" stroke="#e0131f" stroke-width="4"/><ellipse cx="18.500" cy="18" rx="4.500" ry="5" fill="none" stroke="#e0131f" stroke-width="3.600"/><path d="M23.500 11v10.500h6" fill="none" stroke="#e0131f" stroke-width="3.600"/></svg></button>
    <button aria-label="Creative Cloud" class="flex w-[75px] items-center justify-center border-b-[3px] border-[#a4cff0] [border-image:linear-gradient(to_right,transparent_7px,#a4cff0_7px,#a4cff0_68px,transparent_68px)_3]"><span class="flex size-[34px] items-center justify-center rounded-md bg-[conic-gradient(#f40d08,#ff8a00,#e8e337,#4bcf4b,#2d9ceb,#a855f7,#f03db0,#f40d08)]"><svg class="h-[21px] w-[27px] text-white"><use href="#cc"/></svg></span></button>
    <button class="flex w-[75px] items-center justify-center border-x border-b-[3px] border-x-[#101f27] border-b-[#a4cff0] bg-[#3b4a52]"><span class="flex size-[34px] items-center justify-center rounded-md bg-[#00005b] text-[19px] leading-none font-bold text-[#9b9bff]">Pr</span></button>
  </div>
  <div class="ml-auto flex items-center">
    <button aria-label="People"><svg class="h-7 w-[22px]" viewBox="0 0 22 28"><circle cx="15" cy="5" r="4" fill="none" stroke="#fff" stroke-width="1.700"/><circle cx="7" cy="15" r="4" fill="none" stroke="#fff" stroke-width="1.700"/><path d="M1 27c0-5 2-8 6-8s6 3 6 8M11 11c2-3 10-3 10 6" fill="none" stroke="#fff" stroke-width="1.700"/></svg></button>
    <button aria-label="Hidden icons" class="ml-[34px]"><svg class="h-[10px] w-[18px]" viewBox="0 0 18 10"><path d="M.7 9.300L9 1l8.300 8.300" fill="none" stroke="#fff" stroke-width="1.500"/></svg></button>
    <button aria-label="OneDrive paused" class="ml-[15px]"><svg class="mt-1 h-5 w-6" viewBox="0 0 24 20"><path d="M6 16a6 6 0 0 1 0-11C9-1 17-1 19 5c4 1 5 4 4 8z" fill="#0d6ac8"/><path d="M4 16a5.500 5.500 0 0 1 0-10c6 0 8 4 13 10z" fill="#2aa0ea"/><circle cx="17.500" cy="13.500" r="6.400" fill="#7a7a7a"/><path d="M16 10.500v6M19 10.500v6" stroke="#fff" stroke-width="1.500"/></svg></button>
    <button aria-label="OneDrive" class="ml-3"><svg class="h-4 w-6" viewBox="0 0 24 16"><path d="M5 16A5.500 5.500 0 0 1 5 5C8-1.500 16-1.500 18.500 5 25 5 25.500 15 19 16z" fill="#b8bcc0"/><path d="M3 15.500L14 8c3-2 8 1 9 3.500 0 3-2 4.500-4 4.500H5z" fill="#fff"/></svg></button>
    <button aria-label="Battery" class="ml-3"><svg class="h-[14px] w-6" viewBox="0 0 24 14"><path d="M.8.800h20.400v12.400H.8zM23 4v6" fill="none" stroke="#fff" stroke-width="1.600"/><path d="M3 3h13v8H3z" fill="#fff"/></svg></button>
    <button aria-label="Wi-Fi" class="ml-4"><svg class="h-[18px] w-[19px]" viewBox="0 0 19 18"><path d="M1 18C1 8 8 1 18 1M5.500 18C5.500 10.500 10.500 5.500 18 5.500M10 18c0-4.500 3-8 8-8M14 18c0-2 1.500-4 4-4" fill="none" stroke="#fff" stroke-width="1.500"/><circle cx="16.500" cy="16.500" r="1.500" fill="#fff"/></svg></button>
    <button aria-label="Volume" class="ml-[14px]"><svg class="h-5 w-[23px]" viewBox="0 0 23 20"><path d="M1 6.500h3l4.500-5.500v18L4 13.500H1z" fill="none" stroke="#fff" stroke-width="1.500"/><path d="M12 7.500c1.500 2 1.500 3 0 5" fill="none" stroke="#fff" stroke-width="1.500"/><path d="M15 4.500c3 4 3 7 0 11M18.500 2c5 6 5 10 0 16" fill="none" stroke="#7f8a90" stroke-width="1.500"/></svg></button>
    <button class="ml-4 w-[84px] text-center leading-7 whitespace-nowrap">6:47 PM<br>11/2/2021</button>
    <button aria-label="Notifications" class="ml-7"><svg class="h-[25px] w-[25px]" viewBox="0 0 25 25"><path d="M17 20l-5 0v4l-5-4H1V1h22v13" fill="none" stroke="#fff" stroke-width="1.600"/><path d="M21 13c4 5 0 12-7 10 5-1 7-5 7-10z" fill="#101f27" stroke="#fff" stroke-width="1.400"/></svg></button>
    <div class="mr-[6px] ml-[30px] h-[60px] w-px bg-[#8a979d]"></div>
  </div>
</footer>

<script>
  const bar = (x, y, w, h, fill) => `<rect x="${x}" y="${y}" width="${w}" height="${h}" fill="${fill}"/>`;

  // Rulers: a tall tick every fifteen divisions, enough of them for a very wide window
  function ruler(id, step, bottom, tall, short) {
    let out = '';
    for (let i = 0; i < 400; i++) {
      const h = i % 15 === 0 && i ? tall : short;
      out += bar(Math.round(i * step), bottom - h, 1, h, '#4f4f4f');
    }
    document.getElementById(id).innerHTML = out;
  }
  ruler('programRuler', 7.7, 26, 16, 7);
  ruler('timeRuler', 8, 18, 17, 8);

  // Meter scale
  let scale = '';
  for (let i = 0; i <= 30; i++) {
    scale += bar(1, 16 + i * 8.15, i % 6 === 0 ? 6 : 3, 1, '#8a8a8a');
  }
  document.getElementById('meterTicks').innerHTML = scale;

  // Waveform: [position, level] steps, drawn once for each channel
  const levels = [[0,10],[3,14],[15,13],[33,12],[35,10],[42,12],[58,10],[60,8],[62,11],[68,2],[69,10],[78,12],[84,10],[91,11],[100,1],[101,10],[108,12],[113,3],[115,12],[120,11],[124,12],[136,11],[138,12],[171,2],[173,12],[177,2],[179,11],[183,12],[188,6],[189,12],[195,3],[197,11],[203,13],[206,11],[208,14],[245,12],[247,14],[279,12],[281,14],[312,12],[314,14],[360,12],[365,11],[370,9],[373,8],[378,5],[383,6],[385,5],[393,8],[396,10],[399,14],[402,13],[406,12],[409,8],[411,4],[414,9],[416,7],[421,11],[423,13],[429,11],[435,8],[437,9],[440,7],[441,12],[444,2],[449,10],[453,6],[455,7],[457,4],[458,2],[461,9],[466,11],[470,3],[471,10],[476,2],[478,10],[481,5],[483,9],[490,10],[493,7],[496,3],[501,9],[506,4],[507,10],[513,8],[516,11],[521,12],[524,3],[525,10],[530,1],[533,13],[535,12],[537,14],[546,9],[549,5],[551,9],[555,3],[557,13],[560,10],[563,11],[570,9],[573,2],[575,11],[587,7],[590,8],[611,6],[618,10],[623,6],[625,3],[627,9],[635,10],[641,12],[645,2],[647,11],[651,13],[660,11],[666,8],[671,5],[672,10],[675,4],[677,11],[698,10],[708,11],[715,8],[721,4],[723,10],[735,11],[750,10],[758,11],[763,8],[767,6],[770,3],[772,2],[777,11],[780,6],[782,3],[785,11],[791,8],[793,3],[795,8],[798,10],[807,5],[809,2],[815,11],[819,6],[821,10],[825,4],[828,11],[833,8],[835,2],[840,9],[843,6]];
  const channel = base => `M0 ${base}` + levels.map(([x, h]) => `H${x}V${base - h}`).join('') + `H846V${base}z`;
  document.getElementById('wave').innerHTML = `<path d="${channel(18)}${channel(36)}" fill="#2ad69b"/>`;

  // Track headers
  const icon = (id, size) => `<svg class="${size}"><use href="#${id}"/></svg>`;
  function trackHead(name, row, on) {
    const audio = name[0] === 'A';
    return `<div class="${row} flex shrink-0 items-stretch border-[#2f2f2f] bg-[#262626] pl-[69px]">
      <button aria-label="Lock ${name}" class="mr-[3px] flex w-6 items-center justify-center pb-[2px]">${icon('lock', 'h-[17px] w-[13px]')}</button>
      <button class="${on ? 'bg-[#07568a] text-[#9cc4e0]' : 'text-[#9c9c9c]'} w-12 pr-[2px] text-center text-[15px]">${name}</button>
      <button aria-label="Sync lock ${name}" class="flex w-[42px] items-center justify-center pb-[2px]">${icon('sync', 'h-[15px] w-[19px]')}</button>
      ${audio
        ? `<button aria-label="Mute ${name}" class="w-[38px] text-center text-[15px]">M</button><button aria-label="Solo ${name}" class="w-11 text-center text-[15px]">S</button><button aria-label="Record ${name}" class="flex w-[34px] items-center justify-center pb-[2px]">${icon('mic', 'h-[21px] w-[14px]')}</button>`
        : `<button aria-label="Show ${name}" class="flex w-[38px] items-center justify-center">${icon('eye', 'h-[13px] w-5')}</button>`}
    </div>`;
  }
  document.getElementById('videoHeads').innerHTML = trackHead('V3', 'h-[38px] border-b-2', false) + trackHead('V2', 'h-[37px] border-b', false) + trackHead('V1', 'h-9', true);
  document.getElementById('audioHeads').innerHTML = trackHead('A1', 'h-[37px] border-b', true) + trackHead('A2', 'h-[38px] border-b-2', true) + trackHead('A3', 'h-9', true);
</script>
</body>
</html>
